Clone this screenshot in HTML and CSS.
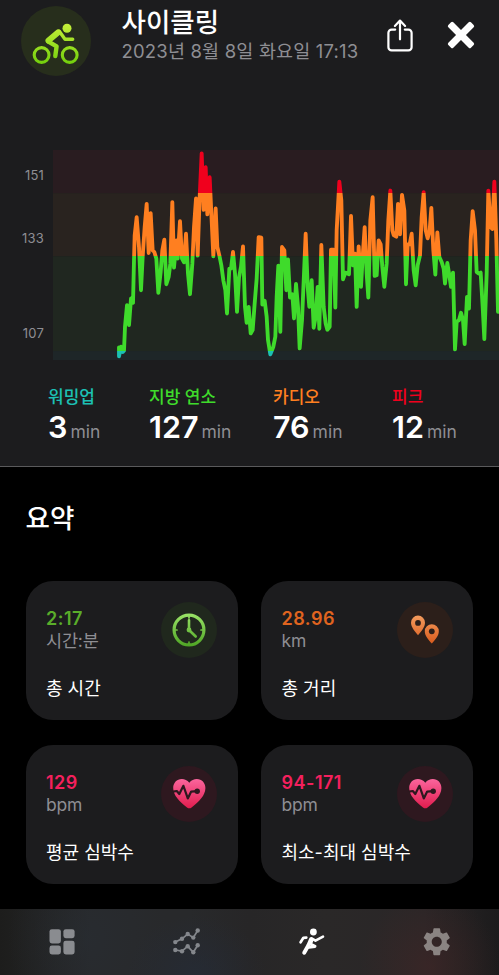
FILE: index.html
```html
<!DOCTYPE html>
<html lang="ko">
  <head>
    <meta charset="UTF-8" />
    <meta name="viewport" content="width=device-width, initial-scale=1.0" />
    <title>사이클링</title>
    <link rel="stylesheet" href="styles.css">
  </head>

  <body>
    <!-- shared gradients -->
    <svg class="defs" width="0" height="0">
      <defs>
        <linearGradient id="lime" gradientUnits="userSpaceOnUse" x1="0" y1="18" x2="0" y2="58">
          <stop offset="0" stop-color="#c6f03a" />
          <stop offset="1" stop-color="#72cf0c" />
        </linearGradient>
        <linearGradient id="green" gradientUnits="userSpaceOnUse" x1="0" y1="11" x2="0" y2="45">
          <stop offset="0" stop-color="#9be468" />
          <stop offset="1" stop-color="#4da323" />
        </linearGradient>
        <linearGradient id="orange" gradientUnits="userSpaceOnUse" x1="0" y1="14" x2="0" y2="42">
          <stop offset="0" stop-color="#f39a5c" />
          <stop offset="1" stop-color="#d95b1d" />
        </linearGradient>
        <linearGradient id="pink" gradientUnits="userSpaceOnUse" x1="0" y1="13" x2="0" y2="43">
          <stop offset="0" stop-color="#fb659d" />
          <stop offset="1" stop-color="#e01b4c" />
        </linearGradient>
      </defs>
    </svg>

    <section class="workout">
      <header class="header">
        <svg class="sport" viewBox="0 0 70 70">
          <circle cx="35" cy="35" r="35" fill="#272e1c" />
          <g fill="none" stroke="url(#lime)" stroke-linecap="round" stroke-linejoin="round">
            <circle cx="20.6" cy="49" r="7.4" stroke-width="3.1" />
            <circle cx="48.7" cy="49" r="7.4" stroke-width="3.1" />
            <path d="M27.5 34.5L37 26.5" stroke-width="6" />
            <path d="M38.3 25.2L44 33.3H51.7" stroke-width="3.4" />
            <path d="M27 35.3L35.6 40.3L34.3 50" stroke-width="4.4" />
          </g>
          <circle cx="46" cy="22.2" r="4.5" fill="url(#lime)" />
        </svg>
        <div class="heading">
          <h1>사이클링</h1>
          <p>2023년 8월 8일 화요일 17:13</p>
        </div>
        <svg class="share" viewBox="0 0 26 33">
          <g fill="none" stroke="#fff" stroke-width="2.2" stroke-linecap="round" stroke-linejoin="round">
            <path d="M8.2 10.6H4.6A3.2 3.2 0 0 0 1.4 13.8V28.2A3.2 3.2 0 0 0 4.6 31.4H21.4A3.2 3.2 0 0 0 24.6 28.2V13.8A3.2 3.2 0 0 0 21.4 10.6H17.8" />
            <path d="M13 20.3V1.8M7.9 6.9L13 1.6L18.1 6.9" />
          </g>
        </svg>
        <svg class="close" viewBox="0 0 28 28">
          <g fill="#fff" transform="rotate(45 14 14)">
            <rect x="-2" y="10.5" width="32" height="7" rx="1.6" />
            <rect x="10.5" y="-2" width="7" height="32" rx="1.6" />
          </g>
        </svg>
      </header>

      <div class="chart">
        <div class="axis">
          <span>151</span>
          <span>133</span>
          <span>107</span>
        </div>
        <svg class="plot" viewBox="159 28 1338 632" preserveAspectRatio="none">
          <defs>
            <!-- hard stops, one colour per heart rate zone -->
            <linearGradient id="zones" gradientUnits="userSpaceOnUse" x1="0" y1="28" x2="0" y2="660">
              <stop offset="0.2057" stop-color="#f0001d" />
              <stop offset="0.2057" stop-color="#ff7f20" />
              <stop offset="0.5063" stop-color="#ff7f20" />
              <stop offset="0.5063" stop-color="#3fdb2b" />
              <stop offset="0.9573" stop-color="#3fdb2b" />
              <stop offset="0.9573" stop-color="#1cc0b4" />
            </linearGradient>
          </defs>
          <rect x="159" y="28" width="1338" height="130" fill="#291c20" />
          <rect x="159" y="158" width="1338" height="190" fill="#29231f" />
          <rect x="159" y="348" width="1338" height="285" fill="#202720" />
          <rect x="159" y="633" width="1338" height="27" fill="#1e2628" />
          <polyline class="pulse" points="
            357,622 357,649 363,620 368,636 372,632 375,560 381,495 387,555 393,475 399,488
            402,360 404,285 410,230 417,320 423,450 428,350 434,260 440,190 446,338 452,218
            458,330 463,335 469,355 475,458 482,395 487,330 493,298 499,432 506,410 511,370
            517,185 522,382 529,300 533,355 540,242 546,355 552,366 558,280 564,400 570,462
            577,370 582,260 588,174 593,346 599,170 605,38 611,208 617,80 622,222 629,110
            635,240 640,348 647,204 652,320 658,345 664,375 670,420 676,450 681,520 688,385
            693,385 699,335 705,400 711,515 717,412 723,380 729,318 735,500 740,548 746,500
            752,580 758,570 764,490 770,415 776,290 784,292 787,493 794,482 800,530 804,600
            811,643 820,620 826,590 830,470 835,376 841,575 846,320 853,330 859,450 864,357
            870,472 877,462 882,535 888,431 894,500 899,625 906,540 912,400 917,280 923,440
            928,500 935,420 941,563 947,530 953,440 958,566 964,314 971,500 977,550 982,569
            989,560 993,328 1001,328 1006,502 1010,270 1018,123 1024,180 1029,417 1036,397
            1047,402 1053,226 1059,375 1065,340 1070,500 1076,318 1083,440 1088,350 1094,260
            1100,400 1105,472 1111,240 1118,170 1124,407 1130,405 1136,300 1142,312 1147,380
            1153,440 1160,370 1165,240 1171,150 1177,270 1181,284 1189,289 1194,190 1200,282
            1206,163 1213,210 1218,432 1223,312 1229,312 1235,280 1241,390 1247,435 1253,375
            1260,345 1265,230 1271,155 1277,270 1283,294 1289,270 1294,202 1300,330 1306,403
            1312,276 1318,350 1325,365 1331,385 1335,430 1342,368 1348,405 1353,440 1359,397
            1365,628 1370,545 1377,540 1383,518 1389,540 1394,612 1401,470 1407,505 1412,300
            1418,212 1425,270 1430,395 1436,400 1442,397 1448,500 1453,597 1460,400 1465,150
            1472,260 1477,266 1483,123 1489,300 1494,515 1502,440" />
        </svg>
      </div>

      <div class="zone-list">
        <div class="zone warmup">
          <h3>워밍업</h3>
          <p><b>3</b>min</p>
        </div>
        <div class="zone fat">
          <h3>지방 연소</h3>
          <p><b>127</b>min</p>
        </div>
        <div class="zone cardio">
          <h3>카디오</h3>
          <p><b>76</b>min</p>
        </div>
        <div class="zone peak">
          <h3>피크</h3>
          <p><b>12</b>min</p>
        </div>
      </div>
    </section>

    <main class="summary">
      <h2>요약</h2>
      <div class="cards">
        <div class="card">
          <div class="card-text">
            <strong class="c-green">2:17</strong>
            <span class="unit">시간:분</span>
            <span class="label">총 시간</span>
          </div>
          <svg class="badge" viewBox="0 0 56 56">
            <circle cx="28" cy="28" r="28" fill="#20281d" />
            <g fill="none" stroke="url(#green)" stroke-linecap="round" stroke-linejoin="round">
              <circle cx="28" cy="28" r="14.9" stroke-width="3.2" />
              <path d="M28.01 18.2L28 28L34.7 34.5" stroke-width="2.6" />
              <path d="M28 14.5L28.01 16M28 40L28.01 41.5M14.5 28L16 28.01M40 28L41.5 28.01" stroke-width="1.7" />
            </g>
            <circle cx="28" cy="28" r="2.4" fill="url(#green)" />
          </svg>
        </div>

        <div class="card">
          <div class="card-text">
            <strong class="c-orange">28.96</strong>
            <span class="unit">km</span>
            <span class="label">총 거리</span>
          </div>
          <svg class="badge" viewBox="0 0 56 56">
            <circle cx="28" cy="28" r="28" fill="#2c1f1a" />
            <path d="M21 13.6A7 7 0 0 0 14 20.6C14 25.3 17.8 29.6 21 33.2C24.2 29.6 28 25.3 28 20.6A7 7 0 0 0 21 13.6Z" fill="url(#orange)" />
            <path d="M34.8 22.2A7 7 0 0 0 27.8 29.2C27.8 33.9 31.6 38 34.8 41.4C38 38 41.8 33.9 41.8 29.2A7 7 0 0 0 34.8 22.2Z" fill="url(#orange)" />
            <circle cx="21" cy="20.9" r="2.9" fill="#2c1f1a" />
            <circle cx="34.8" cy="29.3" r="2.9" fill="#2c1f1a" />
          </svg>
        </div>

        <div class="card">
          <div class="card-text">
            <strong class="c-pink">129</strong>
            <span class="unit">bpm</span>
            <span class="label">평균 심박수</span>
          </div>
          <svg class="badge" viewBox="0 0 56 56">
            <circle cx="28" cy="28" r="28" fill="#2e181f" />
            <path d="M28.3 16.8C30.3 14.2 33 13.1 35.8 13.1C40.8 13.1 44.4 17 44.4 22C44.4 29.5 38 35.5 30.6 41.4Q28.3 43.2 26 41.4C18.6 35.5 12.2 29.5 12.2 22C12.2 17 15.8 13.1 20.8 13.1C23.6 13.1 26.3 14.2 28.3 16.8Z" fill="url(#pink)" />
            <path d="M12 25.7L15.8 25L18.3 28L22.4 19.8L26.8 32.4L30.2 25.6L36 25.2" fill="none" stroke="#2e181f" stroke-width="2.2" stroke-linejoin="round" />
            <circle cx="36.2" cy="25.2" r="2.7" fill="#2e181f" />
          </svg>
        </div>

        <div class="card">
          <div class="card-text">
            <strong class="c-pink">94-171</strong>
            <span class="unit">bpm</span>
            <span class="label">최소-최대 심박수</span>
          </div>
          <svg class="badge" viewBox="0 0 56 56">
            <circle cx="28" cy="28" r="28" fill="#2e181f" />
            <path d="M28.3 16.8C30.3 14.2 33 13.1 35.8 13.1C40.8 13.1 44.4 17 44.4 22C44.4 29.5 38 35.5 30.6 41.4Q28.3 43.2 26 41.4C18.6 35.5 12.2 29.5 12.2 22C12.2 17 15.8 13.1 20.8 13.1C23.6 13.1 26.3 14.2 28.3 16.8Z" fill="url(#pink)" />
            <path d="M12 25.7L15.8 25L18.3 28L22.4 19.8L26.8 32.4L30.2 25.6L36 25.2" fill="none" stroke="#2e181f" stroke-width="2.2" stroke-linejoin="round" />
            <circle cx="36.2" cy="25.2" r="2.7" fill="#2e181f" />
          </svg>
        </div>
      </div>
    </main>

    <nav class="tabbar">
      <a class="tab">
        <svg viewBox="0 0 28 28" fill="#8a8c90">
          <rect x="1.5" y="1.2" width="11.4" height="14.2" rx="2.4" />
          <rect x="15.4" y="1.2" width="11.2" height="9" rx="2.4" />
          <rect x="1.5" y="17.5" width="11.4" height="9" rx="2.4" />
          <rect x="15.4" y="12.7" width="11.2" height="13.8" rx="2.4" />
        </svg>
      </a>
      <a class="tab">
        <svg viewBox="0 0 28 28" fill="#84878c" stroke="#84878c">
          <path d="M2.3 14.1L9 10.8L14.7 6L20.3 9.6L24.7 2.5M2.3 22L9 23.2L14.7 18.3L20.3 24.3L24.7 17.2" fill="none" stroke-width="1.7" />
          <g stroke="none">
            <circle cx="2.3" cy="14.1" r="2.2" />
            <circle cx="9" cy="10.8" r="2.2" />
            <circle cx="14.7" cy="6" r="2.2" />
            <circle cx="20.3" cy="9.6" r="2.2" />
            <circle cx="24.7" cy="2.5" r="2.2" />
            <circle cx="2.3" cy="22" r="2.2" />
            <circle cx="9" cy="23.2" r="2.2" />
            <circle cx="14.7" cy="18.3" r="2.2" />
            <circle cx="20.3" cy="24.3" r="2.2" />
            <circle cx="24.7" cy="17.2" r="2.2" />
          </g>
        </svg>
      </a>
      <a class="tab">
        <svg viewBox="0 0 28 28" fill="none" stroke="#fff" stroke-linecap="round" stroke-linejoin="round">
          <circle cx="15.4" cy="4" r="3.4" fill="#fff" stroke="none" />
          <path d="M8.3 9.6L5.4 9.8L2.6 14.3" stroke-width="2.7" />
          <path d="M13.6 10.3L17.5 12.6L25 8.6" stroke-width="2.6" />
          <path d="M13 11.2L10.3 17.5L6.2 24.8" stroke-width="3.9" />
          <path d="M14 12L12.6 16L17 18.4L11 19.2" stroke-width="3" />
        </svg>
      </a>
      <a class="tab">
        <svg class="gear" viewBox="0 0 24 24" fill="#8a8482">
          <path d="M19.14 12.94c.04-.3.06-.61.06-.94 0-.32-.02-.64-.07-.94l2.03-1.58a.49.49 0 0 0 .12-.61l-1.92-3.32a.488.488 0 0 0-.59-.22l-2.39.96c-.5-.38-1.03-.7-1.62-.94l-.36-2.54a.484.484 0 0 0-.48-.41h-3.84c-.24 0-.43.17-.47.41l-.36 2.54c-.59.24-1.13.57-1.62.94l-2.39-.96c-.22-.08-.47 0-.59.22L2.74 8.87c-.12.21-.08.47.12.61l2.03 1.58c-.05.3-.09.63-.09.94s.02.64.07.94l-2.03 1.58a.49.49 0 0 0-.12.61l1.92 3.32c.12.22.37.29.59.22l2.39-.96c.5.38 1.03.7 1.62.94l.36 2.54c.05.24.24.41.48.41h3.84c.24 0 .44-.17.47-.41l.36-2.54c.59-.24 1.13-.56 1.62-.94l2.39.96c.22.08.47 0 .59-.22l1.92-3.32c.12-.22.07-.47-.12-.61l-2.01-1.58zM12 15.6c-1.98 0-3.6-1.62-3.6-3.6s1.62-3.6 3.6-3.6 3.6 1.62 3.6 3.6-1.62 3.6-3.6 3.6z" />
        </svg>
      </a>
    </nav>
  </body>
</html>
```

FILE: styles.css
```css
* {
  box-sizing: border-box;
  margin: 0;
  padding: 0;
}

body {
  display: flex;
  flex-direction: column;
  height: 975px;
  overflow: hidden;
  background-color: #000;
  color: #fff;
  font-family: "Inter", "Noto Sans CJK KR", sans-serif;
}

svg {
  display: block;
  flex: none;
}

.defs {
  position: absolute;
}

.workout {
  height: 467px;
  background-color: #1c1c1e;
  border-bottom: 1px solid #5a5a5c;
}

/* header */
.header {
  display: flex;
  align-items: flex-start;
  height: 150px;
  padding: 6px 24.5px 0 21px;
}

.sport {
  width: 70px;
  height: 70px;
}

.heading {
  flex: 1;
  padding-left: 30.5px;
  white-space: nowrap;
}

.heading h1 {
  font-size: 26.5px;
  font-weight: 500;
  line-height: 32px;
}

.heading p {
  font-size: 18.5px;
  line-height: 26px;
  letter-spacing: 0.18px;
  color: #8e8e93;
}

.share {
  width: 26px;
  height: 33px;
  margin: 13px 34px 0 0;
}

.close {
  width: 28px;
  height: 28px;
  margin-top: 15px;
}

/* heart rate chart */
.chart {
  display: flex;
  height: 210px;
}

.axis {
  display: flex;
  flex-direction: column;
  width: 53px;
  padding: 16px 9px 0 0;
  font-size: 13px;
  line-height: 18px;
  text-align: right;
  color: #8e8e93;
}

.axis span {
  letter-spacing: 0.2px;
}

.axis span:nth-child(2) {
  margin-top: 45px;
}

.axis span:nth-child(3) {
  margin-top: 77px;
}

.plot {
  width: 446px;
  height: 210px;
}

.pulse {
  fill: none;
  stroke: url(#zones);
  stroke-width: 11.5;
  stroke-linecap: round;
  stroke-linejoin: round;
}

/* minutes per zone */
.zone-list {
  display: flex;
  padding: 26px 0 0 48px;
  white-space: nowrap;
}

.zone {
  width: 101px;
}

.zone.fat {
  width: 124px;
}

.zone.cardio {
  width: 119px;
}

.zone h3 {
  font-size: 17px;
  font-weight: 500;
  line-height: 23px;
}

.zone p {
  font-size: 17.5px;
  line-height: 35px;
  color: #8e8e93;
}

.zone b {
  margin-right: 3px;
  font-size: 30.5px;
  font-weight: 600;
  color: #fff;
}

.warmup h3 {
  color: #1cc0b4;
}

.fat h3 {
  color: #3fdb2b;
}

.cardio h3 {
  color: #ff7f20;
}

.peak h3 {
  color: #f0001d;
}

/* summary */
.summary {
  height: 442px;
  padding: 34px 25.5px 0;
}

.summary h2 {
  height: 80px;
  font-size: 26.5px;
  font-weight: 500;
  line-height: 34px;
}

.cards {
  display: grid;
  grid-template-columns: 212px 212px;
  gap: 25px 23.5px;
}

.card {
  display: flex;
  justify-content: space-between;
  height: 139px;
  padding: 20.5px 20.5px 0;
  border-radius: 27px;
  background-color: #1c1c1e;
}

.card-text {
  display: flex;
  flex-direction: column;
  padding-top: 6px;
  white-space: nowrap;
}

.card strong {
  font-size: 18px;
  font-weight: 600;
  line-height: 22px;
  letter-spacing: 0.5px;
}

.card .unit {
  font-size: 17.5px;
  line-height: 22px;
  letter-spacing: -0.2px;
  color: #8e8e93;
}

.card .label {
  margin-top: 24px;
  font-size: 18px;
  line-height: 26px;
}

.c-green {
  color: #5aad2a;
}

.c-orange {
  color: #e0641f;
}

.c-pink {
  color: #f4205d;
}

.badge {
  width: 56px;
  height: 56px;
  margin-left: -56px;
}

/* tab bar */
.tabbar {
  display: flex;
  height: 66px;
  padding-top: 19px;
  background:
    radial-gradient(ellipse 70px 60px at 196px 66px, rgba(36, 44, 58, 0.6), transparent),
    radial-gradient(ellipse 70px 75px at 430px 58px, rgba(66, 38, 38, 0.6), transparent),
    radial-gradient(ellipse 80px 90px at 88px 30px, rgba(40, 45, 51, 0.6), transparent),
    linear-gradient(90deg, #1d1d1c, #28292b 18%, #28292b 38%, #272627 50%, #2a2828 65%, #2a2627 85%, #1c1b1c);
}

.tab {
  display: flex;
  flex: 1;
  justify-content: center;
}

.tab svg {
  width: 28px;
  height: 28px;
}

.tab .gear {
  width: 33.5px;
  height: 33.5px;
  margin-top: -3px;
}
```
